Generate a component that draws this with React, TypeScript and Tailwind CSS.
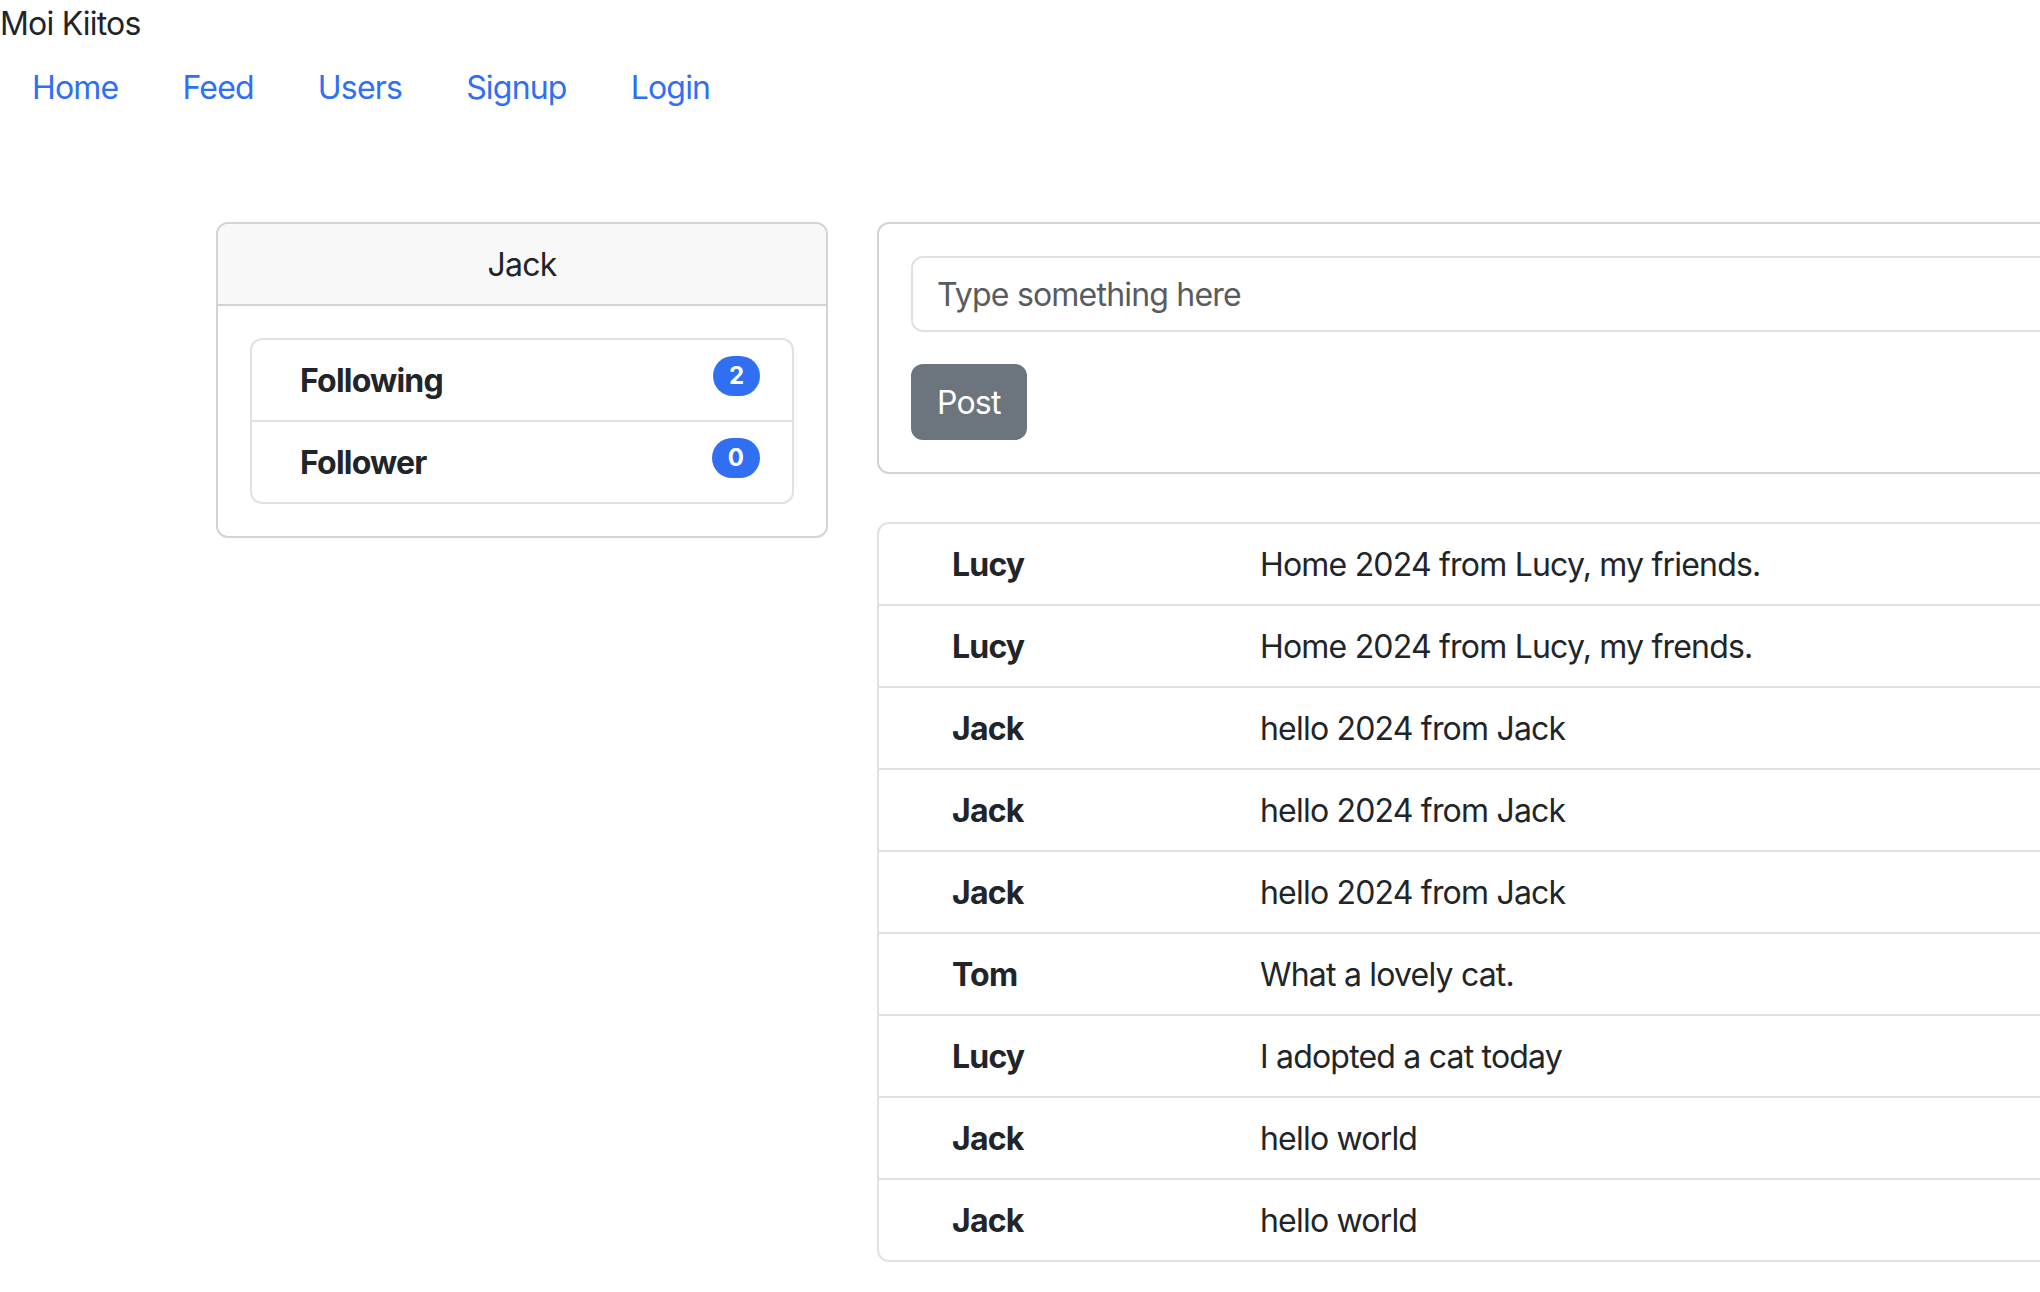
import React from 'react';

const feed = [
  { user: 'Lucy', text: 'Home 2024 from Lucy, my friends.' },
  { user: 'Lucy', text: 'Home 2024 from Lucy, my frends.' },
  { user: 'Jack', text: 'hello 2024 from Jack' },
  { user: 'Jack', text: 'hello 2024 from Jack' },
  { user: 'Jack', text: 'hello 2024 from Jack' },
  { user: 'Tom', text: 'What a lovely cat.' },
  { user: 'Lucy', text: 'I adopted a cat today' },
  { user: 'Jack', text: 'hello world' },
  { user: 'Jack', text: 'hello world' },
];

const navItems = ['Home', 'Feed', 'Users', 'Signup', 'Login'];

export default function App() {
  return (
    <div
      className="w-full min-h-[1292px] overflow-hidden bg-white text-[32px] leading-[48px] tracking-[-0.8px] text-[#212529]"
      style={{ fontFamily: 'Inter, "Liberation Sans", sans-serif' }}
    >
      {/* Brand */}
      <div>Moi Kiitos</div>

      {/* Nav */}
      <nav className="flex py-4">
        {navItems.map((item) => (
          <a key={item} href="#" className="px-8 text-[#2f6ff5]">
            {item}
          </a>
        ))}
      </nav>

      <div className="mt-[94px] flex gap-[49px] pl-[216px]">
        {/* Profile card */}
        <div className="w-[612px] shrink-0 self-start rounded-[12px] border-2 border-[#d3d3d3]">
          <div className="rounded-t-[10px] border-b-2 border-[#d3d3d3] bg-[#f8f8f8] px-8 pt-[17px] pb-[15px] text-center">
            Jack
          </div>
          <div className="p-8">
            <div className="rounded-[12px] border-2 border-[#dee2e6]">
              <div className="flex items-start justify-between px-8 pt-[17px] pb-[15px]">
                <div className="ml-4 font-bold">Following</div>
                <span className="-mt-px rounded-full bg-[#316ff2] px-[16px] py-[8px] text-[24px] font-bold leading-[24px] tracking-normal text-white">2</span>
              </div>
              <div className="flex items-start justify-between border-t-2 border-[#dee2e6] px-8 pt-[17px] pb-[15px]">
                <div className="ml-4 font-bold">Follower</div>
                <span className="-mt-px rounded-full bg-[#316ff2] px-[16px] py-[8px] text-[24px] font-bold leading-[24px] tracking-normal text-white">0</span>
              </div>
            </div>
          </div>
        </div>

        {/* Right column */}
        <div className="w-[1240px] shrink-0">
          <div className="rounded-[12px] border-2 border-[#d3d3d3] p-8">
            <div className="rounded-[12px] border-2 border-[#dee2e6] px-6 pt-[13px] pb-[11px] text-[#595c5f]">
              Type something here
            </div>
            <button className="mt-8 rounded-[12px] border-2 border-[#6c757d] bg-[#6c757d] px-6 pt-[13px] pb-[11px] text-white">
              Post
            </button>
          </div>

          <div className="mt-[48px] rounded-[12px] border-2 border-[#dee2e6]">
            {feed.map((f, i) => (
              <div
                key={i}
                className={`flex px-8 pt-[17px] pb-[15px] ${i > 0 ? 'border-t-2 border-[#dee2e6]' : ''}`}
              >
                <div className="w-[349px] shrink-0 pl-[41px] font-bold">{f.user}</div>
                <div>{f.text}</div>
              </div>
            ))}
          </div>
        </div>
      </div>
    </div>
  );
}
